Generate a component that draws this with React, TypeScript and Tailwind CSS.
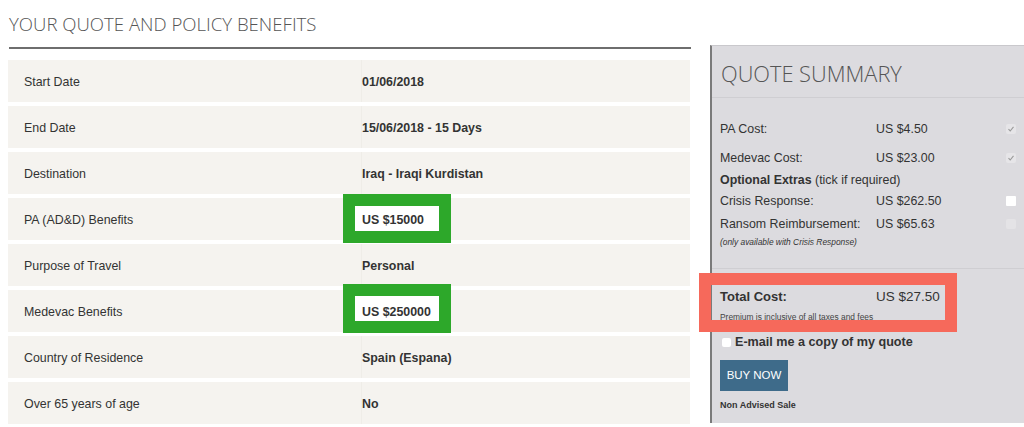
import React from "react";

const rows: { label: string; value: string; box?: string }[] = [
  { label: "Start Date", value: "01/06/2018" },
  { label: "End Date", value: "15/06/2018 - 15 Days" },
  { label: "Destination", value: "Iraq - Iraqi Kurdistan" },
  { label: "PA (AD&D) Benefits", value: "US $15000", box: "top-[-4px]" },
  { label: "Purpose of Travel", value: "Personal" },
  { label: "Medevac Benefits", value: "US $250000", box: "top-[-6px]" },
  { label: "Country of Residence", value: "Spain (Espana)" },
  { label: "Over 65 years of age", value: "No" },
];

function Check({ state }: { state: "checked" | "empty" | "faded" }) {
  if (state === "checked") {
    return (
      <span className="ml-[-2px] w-[10px] h-[10px] bg-[#e6e5e8] rounded-[2px] flex items-center justify-center">
        <svg width="8" height="8" viewBox="0 0 8 8">
          <path d="M1.5 4.2 L3.2 6 L6.5 1.8" stroke="#9a9a9a" strokeWidth="1.1" fill="none" />
        </svg>
      </span>
    );
  }
  if (state === "empty") {
    return <span className="ml-[-2px] w-[10px] h-[10px] bg-white rounded-[1px]" />;
  }
  return <span className="ml-[-2px] w-[10px] h-[10px] bg-[#e4e3e6] rounded-[2px]" />;
}

export default function App() {
  const sans = { fontFamily: '"Liberation Sans", Arial, sans-serif' };
  return (
    <div className="w-[1024px] h-[427px] overflow-hidden bg-white flex" style={sans}>
      <div className="w-[700px] shrink-0 pl-[8px]">
        <div
          className="pl-[1px] pt-[10px] h-[47px] text-[18.6px] font-light text-[#555]"
          style={{ fontFamily: '"Open Sans", sans-serif' }}
        >
          YOUR QUOTE AND POLICY BENEFITS
        </div>
        <div className="ml-[1px] w-[682px] h-[2px] bg-[#6e6e6e]" />
        <div className="mt-[11px] w-[682px] flex flex-col gap-[4px]">
          {rows.map((r) => (
            <div key={r.label} className="relative h-[42px] bg-[#f5f3ef] flex items-center text-[12.4px] text-[#333]">
              <div className="w-[354px] pl-[16px] pt-[2px] border-r border-[#efede8] h-full flex items-center">{r.label}</div>
              <div className="relative h-full pt-[2px] flex items-center font-bold">
                {r.box && (
                  <div className={`absolute left-[-19px] ${r.box} w-[108px] h-[49px] border-[12px] border-[#2da82a] bg-white`} />
                )}
                <span className="relative">{r.value}</span>
              </div>
            </div>
          ))}
        </div>
      </div>
      <div className="mt-[45px] ml-[10px] flex-1 h-[378px] bg-[#dcdbdf] border-l-[2px] border-t border-[#7a7a7a] border-t-[#c9c8cc] relative">
        <div
          className="pl-[9px] pt-[12px] h-[51px] text-[21.8px] font-light text-[#555]"
          style={{ fontFamily: '"Open Sans", sans-serif' }}
        >
          QUOTE SUMMARY
        </div>
        <div className="h-px bg-[#cfced2]" />
        <div className="pl-[8px] pt-[21px] text-[12.4px] text-[#333]">
          <div className="flex items-center h-[20px]">
            <span className="w-[156px]">PA Cost:</span>
            <span className="w-[132px]">US $4.50</span>
            <Check state="checked" />
          </div>
          <div className="flex items-center h-[20px] mt-[9px]">
            <span className="w-[156px]">Medevac Cost:</span>
            <span className="w-[132px]">US $23.00</span>
            <Check state="checked" />
          </div>
          <div className="h-[18px] flex items-center mt-[3px]">
            <span className="font-bold">Optional Extras</span>
            <span>&nbsp;(tick if required)</span>
          </div>
          <div className="flex items-center h-[20px] mt-[2px]">
            <span className="w-[156px]">Crisis Response:</span>
            <span className="w-[132px]">US $262.50</span>
            <Check state="empty" />
          </div>
          <div className="flex items-center h-[20px] mt-[3px]">
            <span className="w-[156px]">Ransom Reimbursement:</span>
            <span className="w-[132px]">US $65.63</span>
            <Check state="faded" />
          </div>
          <div className="text-[8.4px] italic h-[14px] flex items-center mt-[1px]">(only available with Crisis Response)</div>
        </div>
        <div className="mt-[19px] h-px bg-[#cfced2]" />
        <div className="relative ml-[-13px] mt-[4px] w-[258px] h-[59px] border-[12px] border-[#f6695b] pl-[9px] pt-[2px]">
          <div className="flex items-center text-[13px] text-[#333]">
            <span className="w-[156px] font-bold">Total Cost:</span>
            <span className="text-[13.5px]">US $27.50</span>
          </div>
          <div className="text-[8.4px] text-[#444] mt-[4px]">Premium is inclusive of all taxes and fees</div>
        </div>
        <div className="pl-[10px] mt-[2px] flex items-center gap-[4px] h-[17px]">
          <span className="w-[9px] h-[9px] bg-white rounded-[2px]" />
          <span className="text-[12.6px] font-bold text-[#333]">E-mail me a copy of my quote</span>
        </div>
        <button className="ml-[8px] mt-[9px] w-[68px] h-[31px] bg-[#3e6b8a] text-white text-[11.5px] font-medium flex items-center justify-center">
          BUY NOW
        </button>
        <div className="pl-[8px] mt-[8px] text-[9px] font-bold text-[#333]">Non Advised Sale</div>
      </div>
    </div>
  );
}
